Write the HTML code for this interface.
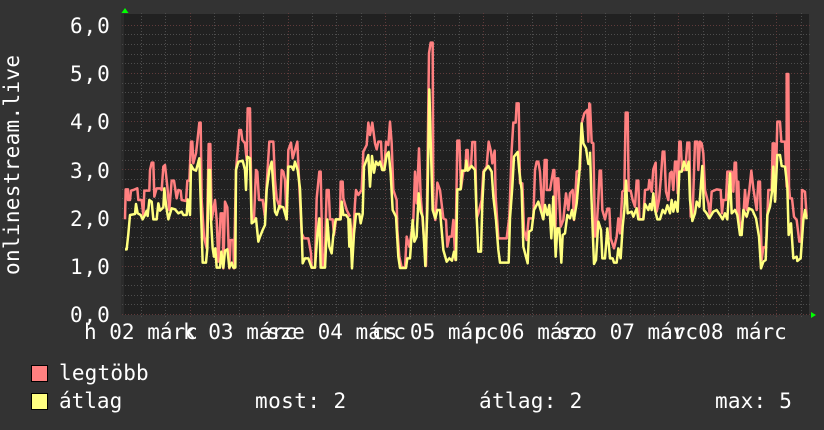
<!DOCTYPE html>
<html><head><meta charset="utf-8"><style>
html,body{margin:0;padding:0;background:#333}
svg{display:block}
text{font-family:"DejaVu Sans Mono","Liberation Mono",monospace;font-size:21px;fill:#fff;white-space:pre}
.y{letter-spacing:.9px}
</style></head><body>
<svg width="824" height="430" viewBox="0 0 824 430" xmlns="http://www.w3.org/2000/svg">
<rect width="824" height="430" fill="#333"/>
<rect x="121" y="14" width="3" height="301" fill="#2c2c2c"/>
<rect x="124" y="14" width="685" height="301" fill="#212121"/>
<g shape-rendering="crispEdges" fill="none" stroke-width="1" stroke-dasharray="1 2">
<path stroke="#4d4d4d" d="M122 34.5H811M122 44.5H811M122 54.5H811M122 63.5H811M122 83.5H811M122 92.5H811M122 102.5H811M122 112.5H811M122 131.5H811M122 141.5H811M122 150.5H811M122 160.5H811M122 179.5H811M122 189.5H811M122 198.5H811M122 208.5H811M122 227.5H811M122 237.5H811M122 247.5H811M122 256.5H811M122 275.5H811M122 285.5H811M122 295.5H811M122 304.5H811"/>
<path stroke="#4d4d4d" d="M141.5 13V317M165.5 13V317M214.5 13V317M239.5 13V317M263.5 13V317M312.5 13V317M336.5 13V317M361.5 13V317M410.5 13V317M434.5 13V317M459.5 13V317M507.5 13V317M532.5 13V317M556.5 13V317M605.5 13V317M630.5 13V317M654.5 13V317M703.5 13V317M728.5 13V317M752.5 13V317M801.5 13V317"/>
<path stroke="#5f3b3b" d="M122 25.5H811M122 73.5H811M122 121.5H811M122 169.5H811M122 218.5H811M122 266.5H811M122 314.5H811"/>
<path stroke="#5f3b3b" d="M190.5 13V317M288.5 13V317M385.5 13V317M483.5 13V317M581.5 13V317M678.5 13V317M776.5 13V317"/>
</g>
<g fill="none" stroke="#ff8080" stroke-width="7.5" stroke-linejoin="round">
<polyline transform="translate(110,120) scale(.33333)" points="45,298 47,208 54,208 54,240 60,240 63,212 70,210 82,205 85,240 95,240 100,285 103,212 118,212 120,150 125,128 130,128 133,230 140,205 150,205 155,210 160,140 165,135 172,200 178,270 185,182 192,182 200,235 205,210 212,212 215,240 228,243 232,182 238,182 243,65 247,65 250,130 258,100 262,65 268,8 272,8 275,240 282,350 290,385 296,72 301,72 305,300 315,240 320,300 325,425 332,280 338,280 340,445 345,245 352,262 358,445 362,360 370,360 372,445 378,150 383,92 388,30 393,30 397,60 405,70 410,120 413,-35 420,-35 425,300 432,295 438,150 442,155 447,240 458,240 465,290 470,195 478,65 490,65 495,180 500,235 510,265 515,150 520,155 525,180 530,298 535,90 543,68 548,115 555,90 562,65 568,200 575,340 582,355 595,355 603,400 605,443 615,443 620,235 628,155 632,155 638,443 645,400 650,210 656,210 660,298 668,298 672,345 678,298 690,298 692,185 698,185 700,235 710,270 720,290"/>
<polyline transform="translate(350,30) scale(.33333)" points="0,565 8,645 15,520 18,480 25,495 35,480 40,365 50,345 55,278 60,315 67,278 75,340 80,358 85,335 93,335 97,420 103,420 108,335 115,345 120,275 125,340 130,480 140,510 142,600 148,680 155,712 165,712 170,620 178,650 190,570 195,425 200,520 207,355 212,500 217,560 228,708 232,450 237,70 242,38 248,38 250,540 256,570 262,458 270,480 280,565 288,570 292,650 298,620 305,620 310,570 316,690 322,332 328,332 333,475 340,425 346,420 349,360 353,360 356,420 363,410 367,336 375,336 380,565 385,550 395,510 400,425 410,410 416,335 423,365 427,400 434,362 437,500 445,625 470,625 478,560 485,360 490,278 497,278 500,220 506,220 510,460 517,460 522,600 530,630 536,565 550,565 555,420 560,395 565,395 570,425 578,565 584,390 590,390 590,480 600,480 610,420 613,420 616,600 620,445 625,445 632,590 640,570 648,490 655,540 660,490 668,480 672,570 680,425 690,420 695,280 703,250 712,240 715,335 718,220 720,220"/>
<polyline transform="translate(590,60) scale(.33333)" points="0,130 5,248 10,250 15,530 20,500 25,420 29,332 33,332 37,450 45,478 52,446 58,446 62,535 72,565 80,530 85,475 90,520 97,395 103,390 107,158 113,158 116,392 122,392 128,420 135,440 140,362 145,362 148,478 160,478 165,390 175,388 178,360 185,395 190,328 197,308 200,455 207,420 213,350 218,275 223,275 228,395 235,420 240,340 245,335 250,390 255,305 260,305 263,400 268,245 272,245 276,330 286,330 292,248 298,248 302,470 308,460 315,245 322,245 325,330 330,245 335,250 340,280 345,390 355,430 360,470 365,395 380,388 392,390 396,460 400,420 408,420 412,335 425,335 430,395 434,308 438,308 442,460 445,365 450,520 460,470 465,390 470,450 478,390 484,332 490,385 500,450 505,365 510,365 515,600 520,562 527,562 530,530 535,390 545,390 548,250 553,250 556,420 562,185 570,185 574,245 585,245 590,380 590,42 595,42 597,380 600,415 606,415 612,470 620,480 628,545 634,545 636,390 645,395 650,470"/>
</g>
<g fill="none" stroke="#ffff80" stroke-width="7.5" stroke-linejoin="round">
<polyline transform="translate(110,120) scale(.33333)" points="45,388 50,388 55,342 60,285 75,282 78,252 83,280 92,285 98,298 105,285 110,272 113,288 118,240 125,245 130,298 140,298 145,250 150,272 160,262 163,205 168,255 175,298 185,265 195,268 205,280 215,275 220,285 230,285 233,238 240,285 243,135 250,148 258,152 268,115 272,240 278,428 288,428 292,385 296,150 300,150 303,300 308,385 312,410 316,385 320,443 330,443 334,395 340,443 345,392 352,388 358,443 365,428 370,443 376,443 378,150 385,125 398,122 405,150 408,210 412,110 420,115 425,310 432,305 438,295 445,365 450,350 458,330 465,315 470,210 478,150 485,125 490,200 495,275 500,285 508,258 520,262 530,298 535,140 545,140 550,150 555,125 563,150 570,205 575,330 578,430 585,415 595,415 605,443 615,443 622,345 628,295 632,443 645,443 652,298 658,380 665,400 670,345 677,298 692,298 695,245 700,285 708,285 715,295 718,380 720,380"/>
<polyline transform="translate(350,30) scale(.33333)" points="0,565 6,715 12,610 18,552 28,552 32,580 38,552 42,410 55,375 60,470 66,378 72,428 78,395 85,405 90,395 97,420 103,420 110,375 116,366 122,430 128,540 138,560 145,680 150,714 168,714 172,685 180,685 188,570 193,635 200,620 206,490 212,545 218,560 226,708 232,540 238,178 242,330 248,540 256,565 262,540 270,540 280,660 290,695 298,685 306,692 312,665 318,690 322,478 332,478 336,422 346,422 349,392 353,422 365,408 375,420 380,560 385,665 393,665 397,520 402,425 415,408 425,425 430,500 438,570 445,660 450,698 476,698 480,565 487,470 492,380 503,366 508,425 515,480 520,650 533,700 537,605 545,600 552,540 565,515 572,540 580,568 585,525 592,555 598,525 604,625 610,500 617,680 622,595 628,595 634,698 638,615 645,610 652,555 660,565 666,540 672,568 680,520 688,430 695,280 700,340 708,355 715,402 720,402"/>
<polyline transform="translate(590,60) scale(.33333)" points="0,275 5,430 12,612 18,600 25,485 33,510 37,595 45,595 52,505 60,595 68,595 72,608 80,608 85,565 92,595 98,500 103,450 108,362 113,460 125,455 130,470 140,445 145,478 160,478 165,432 175,450 180,432 185,450 190,400 195,450 202,478 210,478 218,450 225,460 232,436 240,460 245,420 250,455 256,425 263,455 268,335 275,335 282,305 290,330 296,305 300,420 307,483 315,460 320,425 328,440 337,318 342,450 350,460 358,475 370,455 380,450 390,465 398,478 405,460 412,478 420,340 425,460 435,450 442,465 450,525 455,525 460,450 470,470 477,445 487,450 498,475 507,530 513,625 520,605 527,600 532,465 540,440 546,395 550,320 555,425 562,285 570,285 575,318 585,320 592,380 596,525 603,490 610,595 620,590 622,603 632,595 640,480 645,450 650,478"/>
</g>
<polygon points="125,8 128.5,13 121.5,13" fill="#0f0"/>
<polygon points="811,312 816,315 811,318" fill="#0f0"/>
<text class="y" x="70" y="33">6,0</text>
<text class="y" x="70" y="81">5,0</text>
<text class="y" x="70" y="129">4,0</text>
<text class="y" x="70" y="178">3,0</text>
<text class="y" x="70" y="226">2,0</text>
<text class="y" x="70" y="274">1,0</text>
<text class="y" x="70" y="322">0,0</text>
<text transform="translate(19,275) rotate(-90)" textLength="220">onlinestream.live</text>
<text x="84" y="339">h 02 márc</text>
<text x="183" y="339">k 03 márc</text>
<text x="267" y="339">sze 04 márc</text>
<text x="372" y="339">cs 05 márc</text>
<text x="474" y="339">p 06 márc</text>
<text x="559" y="339">szo 07 márc</text>
<text x="673" y="339">v 08 márc</text>
<rect x="31.5" y="365.5" width="16" height="16" fill="#ff8080" stroke="#000"/>
<rect x="31.5" y="393.5" width="16" height="16" fill="#ffff80" stroke="#000"/>
<text x="59" y="380" letter-spacing=".2">legtöbb</text>
<text x="59" y="408">átlag</text>
<text x="255" y="408" letter-spacing=".45">most: 2</text>
<text x="479" y="408" letter-spacing=".3">átlag: 2</text>
<text x="715" y="408" letter-spacing=".2">max: 5</text>
</svg>
</body></html>
